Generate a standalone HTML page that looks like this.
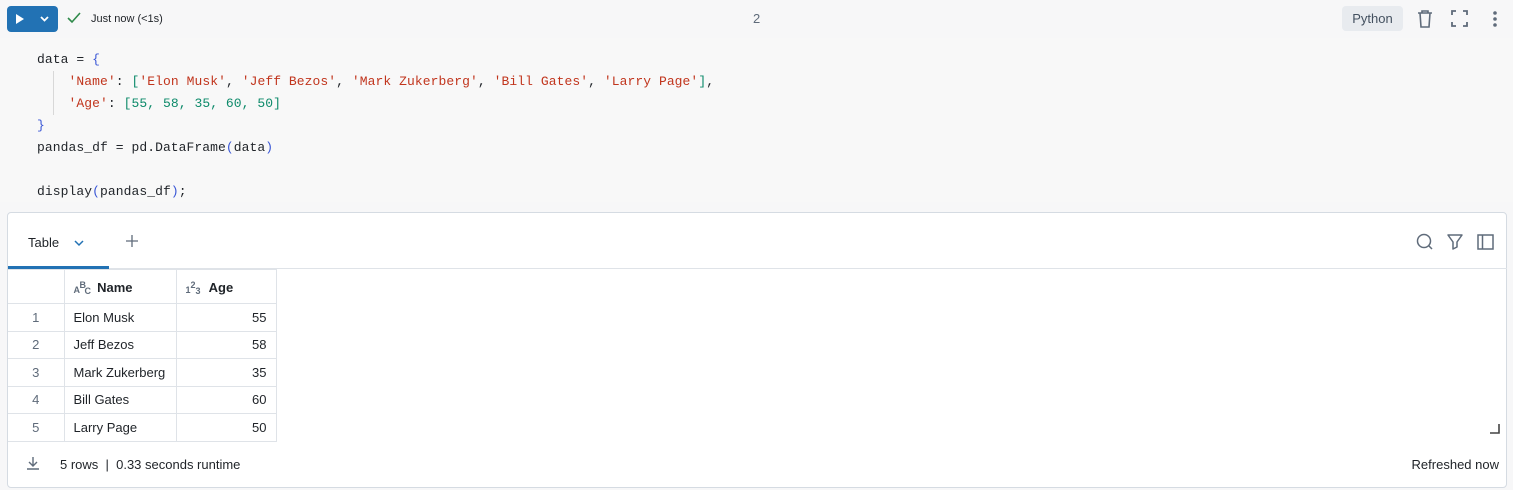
<!DOCTYPE html>
<html><head><style>
*{box-sizing:border-box;margin:0;padding:0}
body{width:1513px;height:490px;background:#f7f7f8;font-family:"Liberation Sans",sans-serif;position:relative;overflow:hidden;color:#1f2328}
.abs{position:absolute}
.code{position:absolute;left:0;top:38px;width:1513px;height:164px;background:#f8f8f8}
.code pre{position:absolute;left:37px;top:11px;font-family:"Liberation Mono",monospace;font-size:13px;letter-spacing:0.07px;line-height:22px;color:#1f2328}
.s{color:#c1351d}.n{color:#0d8a6a}.b{color:#3a57d6}
.out{position:absolute;left:7px;top:212px;width:1500px;height:276px;background:#fff;border:1px solid #d5dbe2;border-radius:4px}
table{border-collapse:collapse;position:absolute;left:0;top:56px;font-size:13px}
td,th{border:1px solid #dfe3e8;height:27.5px;padding:0 9px;font-weight:normal;text-align:left;vertical-align:middle}
th{height:34px;font-weight:bold;color:#1f2328;padding-top:2px}
td.i{width:56px;text-align:center;color:#5f6b7a;border-left:none}
td.nm{width:112px}
td.ag{width:100px;text-align:right}
.ic{display:inline-block;position:relative;width:20px;height:14px;vertical-align:-2px;font-size:9px;color:#5f6b7a;font-weight:bold}
.ic span{position:absolute}
</style></head><body>
<div class="abs" style="left:7px;top:6px;width:51px;height:26px;background:#2272b4;border-radius:4px"></div>
<svg class="abs" style="left:14px;top:13px" width="40" height="12"><path d="M2 1 L10 6 L2 11Z" fill="#fff"/><path d="M27 4 L30.5 7.5 L34 4" stroke="#fff" stroke-width="1.8" fill="none"/></svg>
<svg class="abs" style="left:67px;top:12px" width="14" height="12"><path d="M1 6 L5 10 L13 1" stroke="#2f8a4a" stroke-width="1.6" fill="none"/></svg>
<div class="abs" style="left:91px;top:13px;font-size:11px;color:#1f2328">Just now (&lt;1s)</div>
<div class="abs" style="left:753px;top:11px;font-size:13px;color:#5f6b7a">2</div>
<div class="abs" style="left:1342px;top:6px;width:61px;height:25px;background:#e8ebef;border-radius:4px;font-size:13px;color:#445160;text-align:center;line-height:25px">Python</div>
<svg class="abs" style="left:1415px;top:9px" width="20" height="20"><path d="M3 4H17M7 4V2H13V4M5 4L6 18H14L15 4" stroke="#5f6b7a" stroke-width="1.6" fill="none"/></svg>
<svg class="abs" style="left:1451px;top:10px" width="17" height="17"><path d="M1 5V1H5M12 1H16V5M16 12V16H12M5 16H1V12" stroke="#5f6b7a" stroke-width="1.8" fill="none"/></svg>
<svg class="abs" style="left:1492px;top:10px" width="6" height="18"><circle cx="3" cy="3" r="1.8" fill="#5f6b7a"/><circle cx="3" cy="9" r="1.8" fill="#5f6b7a"/><circle cx="3" cy="15" r="1.8" fill="#5f6b7a"/></svg>
<div class="code"><pre>data = <span class="b">{</span>
    <span class="s">'Name'</span>: <span class="n">[</span><span class="s">'Elon Musk'</span>, <span class="s">'Jeff Bezos'</span>, <span class="s">'Mark Zukerberg'</span>, <span class="s">'Bill Gates'</span>, <span class="s">'Larry Page'</span><span class="n">]</span>,
    <span class="s">'Age'</span>: <span class="n">[55, 58, 35, 60, 50]</span>
<span class="b">}</span>
pandas_df = pd.DataFrame<span class="b">(</span>data<span class="b">)</span>

display<span class="b">(</span>pandas_df<span class="b">)</span>;</pre>
<div class="abs" style="left:53px;top:33px;width:1px;height:44px;background:#d8d8d8"></div></div>
<div class="out">
<div class="abs" style="left:20px;top:22px;font-size:13px">Table</div>
<svg class="abs" style="left:66px;top:26px" width="10" height="8"><path d="M1 2L5 6L9 2" stroke="#2272b4" stroke-width="1.5" fill="none"/></svg>
<svg class="abs" style="left:117px;top:21px" width="14" height="14"><path d="M7 1V13M1 7H13" stroke="#5f6b7a" stroke-width="1.3"/></svg>
<div class="abs" style="left:0;top:53px;width:101px;height:3px;background:#2272b4"></div>
<div class="abs" style="left:101px;top:55px;width:1398px;height:1px;background:#dfe3e8"></div>
<svg class="abs" style="left:1407px;top:20px" width="90" height="18"><circle cx="9" cy="8" r="6.5" stroke="#5f6b7a" stroke-width="1.5" fill="none"/><path d="M13.5 12.5L17 16" stroke="#5f6b7a" stroke-width="1.5"/><path d="M33 2H47L42 9V14L38 16V9Z" stroke="#5f6b7a" stroke-width="1.5" fill="none" stroke-linejoin="round"/><rect x="63" y="2" width="15" height="14" stroke="#5f6b7a" stroke-width="1.5" fill="none"/><path d="M67.5 2V16" stroke="#5f6b7a" stroke-width="1.5"/></svg>
<table>
<tr><th style="border-left:none;width:56px"></th><th><span class="ic"><span style="left:0;top:5px">A</span><span style="left:6px;top:0">B</span><span style="left:11px;top:6px">C</span></span> Name</th><th><span class="ic"><span style="left:0;top:5px">1</span><span style="left:5px;top:0">2</span><span style="left:10px;top:6px">3</span></span> Age</th></tr>
<tr><td class="i">1</td><td class="nm">Elon Musk</td><td class="ag">55</td></tr>
<tr><td class="i">2</td><td class="nm">Jeff Bezos</td><td class="ag">58</td></tr>
<tr><td class="i">3</td><td class="nm">Mark Zukerberg</td><td class="ag">35</td></tr>
<tr><td class="i">4</td><td class="nm">Bill Gates</td><td class="ag">60</td></tr>
<tr><td class="i">5</td><td class="nm">Larry Page</td><td class="ag">50</td></tr>
</table>
<svg class="abs" style="left:1481px;top:210px" width="12" height="12"><path d="M1 10H10V1" stroke="#444" stroke-width="1.6" fill="none"/></svg>
<svg class="abs" style="left:18px;top:243px" width="14" height="14"><path d="M7 1V9M3 6L7 10L11 6M1 13H13" stroke="#5f6b7a" stroke-width="1.4" fill="none"/></svg>
<div class="abs" style="left:52px;top:244px;font-size:13px">5 rows &nbsp;|&nbsp; 0.33 seconds runtime</div>
<div class="abs" style="right:7px;top:244px;font-size:13px">Refreshed now</div>
</div>
</body></html>
